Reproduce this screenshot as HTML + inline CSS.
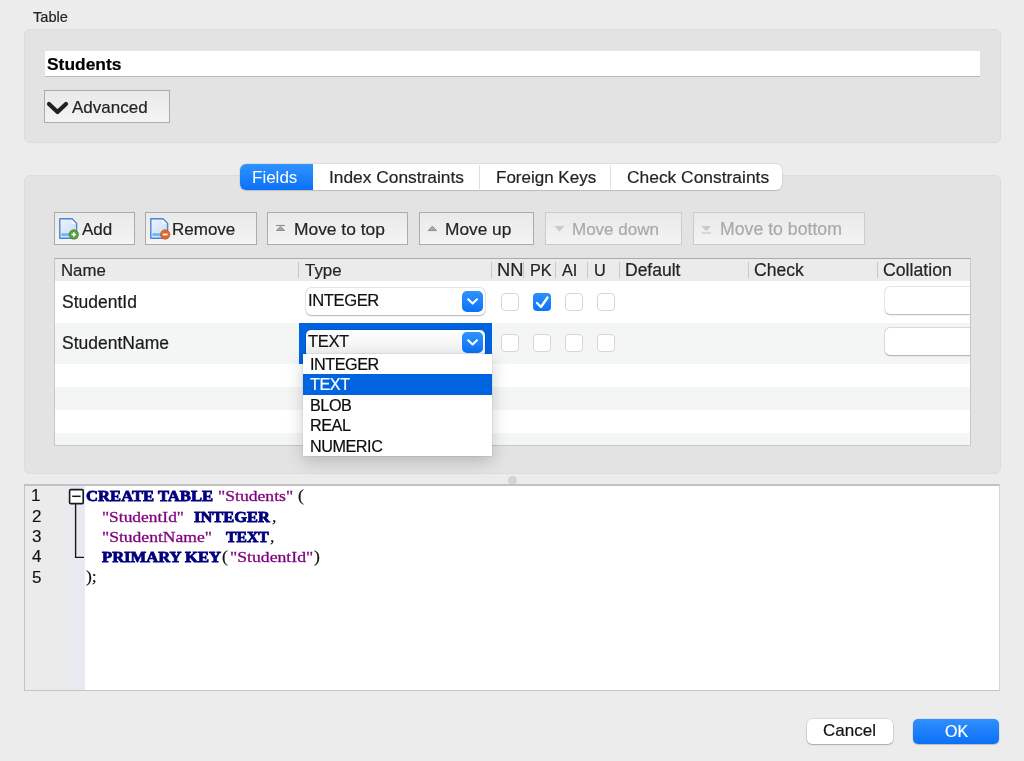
<!DOCTYPE html>
<html><head><meta charset="utf-8">
<style>
*{box-sizing:border-box}
html,body{margin:0;padding:0}
body{width:1024px;height:761px;overflow:hidden;background:#ececec;position:relative;font-family:"Liberation Sans",sans-serif;color:#242424}
.a{position:absolute}
.t{position:absolute;white-space:nowrap;line-height:20px;font-size:17px;will-change:transform;-webkit-text-stroke-width:0.2px}
.panel{position:absolute;background:#e3e3e3;border:1px solid #dcdcdc;border-radius:6px}
.btn{position:absolute;border:1px solid #ababab;background:linear-gradient(#e9e9e9,#f4f4f4);}
.btn.dis{border-color:#cbcbcb}
.dis .t{color:#a9a9a9}
.hsep{position:absolute;top:4px;width:1px;height:16px;background:#c9c9c9}
.cb{position:absolute;width:18px;height:18px;border:1px solid #d6d6d6;border-radius:4px;background:#fff}
.ln{font-size:17px;color:#111;-webkit-text-stroke-width:0.15px}
.dd{font-size:16.2px;letter-spacing:-0.45px;color:#0c0c0c}
.code{font-family:"Liberation Serif",serif;color:#111;font-size:15.3px;transform-origin:0 0}
.kw{color:#00007f;font-weight:bold;-webkit-text-stroke:0.8px #00007f}
.st{color:#7f007f;-webkit-text-stroke:0.3px #7f007f}
.pn{color:#111;font-size:16px}
.row{position:absolute;left:0;width:915px}
</style></head><body>

<div class="t" style="left:33px;top:7px;font-size:14.6px">Table</div>

<div class="panel" style="left:24px;top:29px;width:977px;height:114px"></div>
<div class="a" style="left:45px;top:51px;width:935px;height:26px;background:#fff;border-bottom:1px solid #b9b9b9"></div>
<div class="t" style="left:46.6px;top:54px;font-size:17.4px;font-weight:bold;color:#000">Students</div>

<div class="btn" style="left:44px;top:90px;width:126px;height:33px"></div>
<svg class="a" style="left:44px;top:96px" width="28" height="24"><path d="M5 8 L13.5 16 L22 8" fill="none" stroke="#222" stroke-width="4.2" stroke-linecap="round" stroke-linejoin="round"/></svg>
<div class="t" style="left:72px;top:98px">Advanced</div>

<!-- second panel -->
<div class="panel" style="left:24px;top:175px;width:977px;height:299px"></div>

<!-- tabs -->
<div class="a" style="left:240px;top:164px;width:542px;height:26px;background:#fff;border-radius:6px;box-shadow:0 0 0 0.5px rgba(0,0,0,0.12),0 1px 1px rgba(0,0,0,0.12)"></div>
<div class="a" style="left:240px;top:164px;width:73px;height:26px;background:linear-gradient(#3093fd,#0c70f8);border-radius:6px 0 0 6px"></div>
<div class="a" style="left:479px;top:165px;width:1px;height:24px;background:#dedede"></div>
<div class="a" style="left:610px;top:165px;width:1px;height:24px;background:#dedede"></div>
<div class="t" style="left:251.5px;top:168px;color:#fff;-webkit-text-stroke-width:0">Fields</div>
<div class="t" style="left:328.5px;top:167.3px;font-size:17.35px">Index Constraints</div>
<div class="t" style="left:496px;top:168px">Foreign Keys</div>
<div class="t" style="left:626.5px;top:167.3px;font-size:17.4px">Check Constraints</div>

<!-- toolbar -->
<div class="btn" style="left:54px;top:212px;width:81px;height:33px"></div>
<div class="t" style="left:82px;top:220px">Add</div>
<div class="btn" style="left:145px;top:212px;width:112px;height:33px"></div>
<div class="t" style="left:172px;top:220px">Remove</div>
<div class="btn" style="left:267px;top:212px;width:141px;height:33px"></div>
<div class="t" style="left:294px;top:218.6px;font-size:17.4px">Move to top</div>
<div class="btn" style="left:419px;top:212px;width:115px;height:33px"></div>
<div class="t" style="left:444.5px;top:219px;font-size:17.3px">Move up</div>
<div class="btn dis" style="left:545px;top:212px;width:137px;height:33px"><div class="t" style="left:26px;top:7px">Move down</div></div>
<div class="btn dis" style="left:693px;top:212px;width:172px;height:33px"><div class="t" style="left:25.5px;top:6.4px;font-size:17.7px">Move to bottom</div></div>


<!-- toolbar icons -->
<svg class="a" style="left:58px;top:217px" width="24" height="24">
 <defs><linearGradient id="dg" x1="0" y1="0" x2="1" y2="1"><stop offset="0" stop-color="#eef4fd"/><stop offset="1" stop-color="#c5daf6"/></linearGradient></defs>
 <path d="M1.8 1.8 H14 L18.6 6.4 V21.3 H1.8 Z" fill="url(#dg)" stroke="#4a86d6" stroke-width="1.4" stroke-linejoin="round"/>
 <path d="M13.6 2.6 V6.8 H17.8" fill="#fff" stroke="none"/>
 <rect x="3.4" y="16.2" width="11" height="2.8" fill="#6cb9f4"/>
 <circle cx="15.8" cy="17.5" r="4.7" fill="#5b9f3d" stroke="#3e7d28" stroke-width="0.7"/>
 <path d="M13.5 17.5 H18.1 M15.8 15.2 V19.8" stroke="#fff" stroke-width="1.5"/>
</svg>
<svg class="a" style="left:149px;top:217px" width="24" height="24">
 <path d="M1.8 1.8 H14 L18.6 6.4 V21.3 H1.8 Z" fill="url(#dg)" stroke="#4a86d6" stroke-width="1.4" stroke-linejoin="round"/>
 <path d="M13.6 2.6 V6.8 H17.8" fill="#fff" stroke="none"/>
 <rect x="3.4" y="16.2" width="11" height="2.8" fill="#6cb9f4"/>
 <circle cx="16.2" cy="17.5" r="4.7" fill="#e1692c" stroke="#c0501c" stroke-width="0.7"/>
 <path d="M13.8 17.5 H18.6" stroke="#fff" stroke-width="1.6"/>
</svg>
<svg class="a" style="left:270px;top:218px" width="20" height="20">
 <path d="M6.2 7.5 H14.9" stroke="#8a8a8a" stroke-width="1.1"/>
 <path d="M6.4 12.5 L10.55 8.6 L14.7 12.5 Z" fill="#a9a9a9" stroke="#888" stroke-width="0.9" stroke-linejoin="round"/>
</svg>
<svg class="a" style="left:422px;top:218px" width="20" height="20">
 <path d="M6.1 12.6 L10.3 8.2 L14.6 12.6 Z" fill="#a9a9a9" stroke="#888" stroke-width="0.9" stroke-linejoin="round"/>
</svg>
<svg class="a" style="left:548px;top:218px" width="20" height="20">
 <path d="M7.4 8.4 L11.4 13.2 L15.6 8.4 Z" fill="#cacaca" stroke="#c4c4c4" stroke-width="0.8" stroke-linejoin="round"/>
</svg>
<svg class="a" style="left:696px;top:218px" width="20" height="20">
 <path d="M6.2 8.4 L10.2 12.8 L14.2 8.4 Z" fill="#cacaca" stroke="#c4c4c4" stroke-width="0.8" stroke-linejoin="round"/>
 <path d="M6 15 H14.8" stroke="#c4c4c4" stroke-width="1.1"/>
</svg>

<!-- table -->
<div class="a" id="tbl" style="left:54px;top:258px;width:917px;height:188px;border:1px solid #c8c8c8;border-top-color:#aaaaaa;background:#fff;overflow:hidden">
  <div class="row" style="top:0;height:22px;background:#ebebeb"></div>
  <div class="row" style="top:22px;height:42px;background:#fff"></div>
  <div class="row" style="top:64px;height:41px;background:#f4f5f5"></div>
  <div class="row" style="top:105px;height:23px;background:#fff"></div>
  <div class="row" style="top:128px;height:23px;background:#f4f5f5"></div>
  <div class="row" style="top:151px;height:23px;background:#fff"></div>
  <div class="row" style="top:174px;height:23px;background:#f4f5f5"></div>
</div>

<!-- table header -->
<div class="t" style="left:60.5px;top:260.8px;font-size:16.8px">Name</div>
<div class="t" style="left:305px;top:260.8px;font-size:16.9px">Type</div>
<div class="a" style="left:492px;top:258px;width:32px;height:23px;overflow:hidden"><div class="t" style="left:5px;top:2.2px;font-size:18.3px">NN</div></div>
<div class="t" style="left:530px;top:260px;font-size:16.3px">PK</div>
<div class="t" style="left:562px;top:260px;font-size:16.3px">AI</div>
<div class="t" style="left:594px;top:260px;font-size:16.3px">U</div>
<div class="t" style="left:625px;top:260.3px;font-size:17.5px">Default</div>
<div class="t" style="left:754px;top:260.3px;font-size:17.6px">Check</div>
<div class="t" style="left:882.5px;top:260.3px;font-size:17.7px">Collation</div>
<div class="hsep" style="left:298px;top:262px"></div>
<div class="hsep" style="left:491px;top:262px"></div>
<div class="hsep" style="left:523px;top:262px"></div>
<div class="hsep" style="left:555px;top:262px"></div>
<div class="hsep" style="left:587px;top:262px"></div>
<div class="hsep" style="left:619px;top:262px"></div>
<div class="hsep" style="left:748px;top:262px"></div>
<div class="hsep" style="left:877px;top:262px"></div>

<!-- row texts -->
<div class="t" style="left:61.5px;top:291.8px;font-size:17.5px;color:#1a1a1a">StudentId</div>
<div class="t" style="left:61.5px;top:333px;font-size:17.5px;color:#1a1a1a">StudentName</div>

<!-- combo row1 -->
<div class="a" style="left:306px;top:288px;width:179px;height:27px;background:#fff;border-radius:5px;box-shadow:0 0 0 0.5px rgba(0,0,0,0.12),0 0.5px 1.5px rgba(0,0,0,0.25)"></div>
<div class="a" style="left:462px;top:291px;width:21px;height:21px;border-radius:5px;background:linear-gradient(#2f93ff,#0b72f9)"></div>
<svg class="a" style="left:462px;top:291px" width="21" height="21"><path d="M6.2 8.3 L10.6 12.6 L15 8.3" fill="none" stroke="#fff" stroke-width="2.1" stroke-linecap="round" stroke-linejoin="round"/></svg>
<div class="t" style="left:307.5px;top:291px;font-size:16.6px;letter-spacing:-0.4px;color:#111">INTEGER</div>

<!-- selected cell row2 -->
<div class="a" style="left:299px;top:323px;width:193px;height:41px;background:#0064e1"></div>
<div class="a" style="left:306px;top:330px;width:179px;height:27px;background:linear-gradient(#fdfdfd,#f1f1f1);border-radius:5px;box-shadow:0 0 0 0.5px rgba(0,0,0,0.12),0 0.5px 1.5px rgba(0,0,0,0.25)"></div>
<div class="a" style="left:462px;top:332px;width:21px;height:21px;border-radius:5px;background:linear-gradient(#2f93ff,#0b72f9)"></div>
<svg class="a" style="left:462px;top:332px" width="21" height="21"><path d="M6.2 8.3 L10.6 12.6 L15 8.3" fill="none" stroke="#fff" stroke-width="2.1" stroke-linecap="round" stroke-linejoin="round"/></svg>
<div class="t" style="left:307.5px;top:331.5px;font-size:16.6px;letter-spacing:-0.4px;color:#111">TEXT</div>

<!-- checkboxes -->
<div class="cb" style="left:501px;top:293px"></div>
<div class="a" style="left:533px;top:293px;width:18px;height:18px;border-radius:4px;background:linear-gradient(#2e8ffe,#0d74fa)"></div>
<svg class="a" style="left:533px;top:293px" width="18" height="18"><path d="M4 10 L8 14 L14.5 4.5" fill="none" stroke="#fff" stroke-width="2.3" stroke-linecap="round" stroke-linejoin="round"/></svg>
<div class="cb" style="left:565px;top:293px"></div>
<div class="cb" style="left:597px;top:293px"></div>
<div class="cb" style="left:501px;top:334px"></div>
<div class="cb" style="left:533px;top:334px"></div>
<div class="cb" style="left:565px;top:334px"></div>
<div class="cb" style="left:597px;top:334px"></div>

<!-- collation combos clipped -->
<div class="a" style="left:880px;top:282px;width:90px;height:80px;overflow:hidden">
  <div class="a" style="left:5px;top:5px;width:120px;height:27px;background:#fff;border-radius:5px;box-shadow:0 0 0 0.5px rgba(0,0,0,0.12),0 0.5px 1.5px rgba(0,0,0,0.25)"></div>
  <div class="a" style="left:5px;top:46px;width:120px;height:27px;background:#fff;border-radius:5px;box-shadow:0 0 0 0.5px rgba(0,0,0,0.12),0 0.5px 1.5px rgba(0,0,0,0.25)"></div>
</div>

<!-- dropdown -->
<div class="a" style="left:303px;top:354px;width:189px;height:102px;background:#fff;box-shadow:0 0 0 0.5px rgba(0,0,0,0.1),0 5px 16px rgba(0,0,0,0.2)"></div>
<div class="a" style="left:303px;top:374px;width:189px;height:21px;background:#0064e1"></div>
<div class="t dd" style="left:309.5px;top:353.5px">INTEGER</div>
<div class="t dd" style="left:309.5px;top:373.5px;color:#fff">TEXT</div>
<div class="t dd" style="left:309.5px;top:394.5px">BLOB</div>
<div class="t dd" style="left:309.5px;top:415.3px">REAL</div>
<div class="t dd" style="left:309.5px;top:435.5px">NUMERIC</div>

<!-- splitter dot -->
<div class="a" style="left:508px;top:476px;width:9px;height:9px;border-radius:50%;background:#d3d3d3"></div>

<!-- editor -->
<div class="a" style="left:24px;top:484px;width:976px;height:207px;background:#fff;border:1px solid #c4c4c4;border-top:2px solid #c2c2c2;border-right-color:#d6d6d6">
  <div class="a" style="left:0;top:0;width:42px;height:204px;background:#ebebeb"></div>
  <div class="a" style="left:42px;top:0;width:18px;height:204px;background:#e9e9f2"></div>
</div>
<div class="t ln" style="left:31.15px;top:486.20px">1</div>
<div class="t ln" style="left:31.75px;top:506.60px">2</div>
<div class="t ln" style="left:31.85px;top:526.90px">3</div>
<div class="t ln" style="left:31.85px;top:547.20px">4</div>
<div class="t ln" style="left:31.85px;top:567.50px">5</div>
<svg class="a" style="left:60px;top:484px" width="30" height="80"><rect x="9.6" y="5.6" width="13.6" height="14" rx="1.2" fill="#fff" stroke="#1a1a1a" stroke-width="1.6"/><path d="M12.2 12.3 H20.6" stroke="#1a1a1a" stroke-width="1.5"/><path d="M15.6 20 V73.3 H24" fill="none" stroke="#151515" stroke-width="1.35"/></svg>

<div class="t code kw" style="left:86.00px;top:485.90px;transform:scaleX(1.088)">CREATE TABLE</div>
<div class="t code st" style="left:217.80px;top:485.90px;transform:scaleX(1.153)">&quot;Students&quot;</div>
<div class="t code pn" style="left:298.40px;top:485.90px;transform:scaleX(1.1)">(</div>
<div class="t code st" style="left:102.00px;top:507.10px;transform:scaleX(1.139)">&quot;StudentId&quot;</div>
<div class="t code kw" style="left:194.30px;top:507.10px;transform:scaleX(1.075)">INTEGER</div>
<div class="t code pn" style="left:271.50px;top:507.10px;transform:scaleX(1.1)">,</div>
<div class="t code st" style="left:102.00px;top:527.10px;transform:scaleX(1.147)">&quot;StudentName&quot;</div>
<div class="t code kw" style="left:225.80px;top:527.10px;transform:scaleX(1.025)">TEXT</div>
<div class="t code pn" style="left:269.50px;top:527.10px;transform:scaleX(1.1)">,</div>
<div class="t code kw" style="left:102.00px;top:546.60px;transform:scaleX(1.084)">PRIMARY KEY</div>
<div class="t code pn" style="left:221.60px;top:546.60px;transform:scaleX(1.1)">(</div>
<div class="t code st" style="left:229.90px;top:546.60px;transform:scaleX(1.156)">&quot;StudentId&quot;</div>
<div class="t code pn" style="left:313.70px;top:546.60px;transform:scaleX(1.1)">)</div>
<div class="t code pn" style="left:86.00px;top:566.60px;transform:scaleX(1.1)">);</div>

<!-- bottom buttons -->
<div class="a" style="left:807px;top:719px;width:86px;height:25px;background:#fff;border-radius:5px;box-shadow:0 0 0 0.5px rgba(0,0,0,0.15),0 1px 1.5px rgba(0,0,0,0.22)"></div>
<div class="t" style="left:823px;top:721px;color:#111">Cancel</div>
<div class="a" style="left:913px;top:719px;width:86px;height:25px;background:linear-gradient(#2f90fd,#0c70f8);border-radius:5px;box-shadow:0 0 0 0.5px rgba(0,0,0,0.1),0 1px 1px rgba(0,0,0,0.15)"></div>
<div class="t" style="left:945.3px;top:721.5px;font-size:16px;color:#fff">OK</div>

</body></html>
